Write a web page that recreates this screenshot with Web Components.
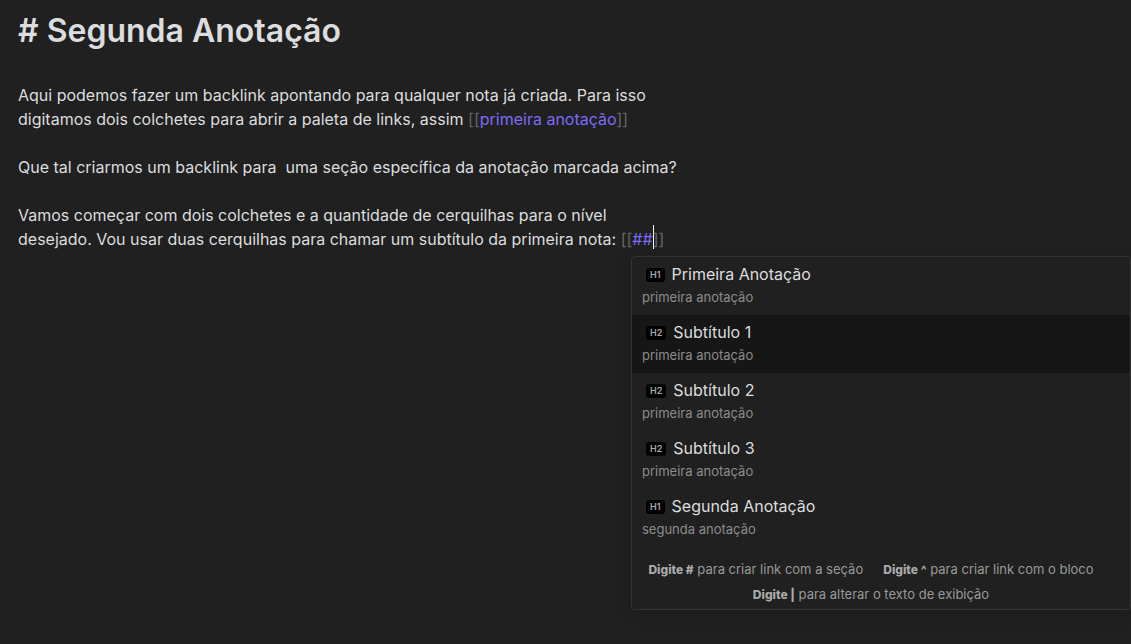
<!DOCTYPE html>
<html lang="pt-BR">
<head>
<meta charset="utf-8">
<meta name="viewport" content="width=device-width, initial-scale=1">
<title>Segunda Anotação</title>
<style>
  body {
    margin: 0;
    min-height: 100vh;
    background: #202020;
    color: #dcddde;
    font: 16px/24px Inter, sans-serif;
    --muted: #999999;
    --faint: #666666;
    --accent: #7b6cf6;
    --border: #333333;
  }
</style>
</head>
<body>
<note-editor>
  <h1 slot="title"># Segunda Anotação</h1>
  <note-paragraph>Aqui podemos fazer um backlink apontando para qualquer nota já criada. Para isso digitamos dois colchetes para abrir a paleta de links, assim <wiki-link>primeira anotação</wiki-link></note-paragraph>
  <note-paragraph>Que tal criarmos um backlink para  uma seção específica da anotação marcada acima?</note-paragraph>
  <note-paragraph>Vamos começar com dois colchetes e a quantidade de cerquilhas para o nível desejado. Vou usar duas cerquilhas para chamar um subtítulo da primeira nota: <wiki-link editing>##</wiki-link></note-paragraph>
  <suggestion-menu slot="menu">
    <suggestion-item level="H1" note="primeira anotação">Primeira Anotação</suggestion-item>
    <suggestion-item level="H2" note="primeira anotação" selected>Subtítulo 1</suggestion-item>
    <suggestion-item level="H2" note="primeira anotação">Subtítulo 2</suggestion-item>
    <suggestion-item level="H2" note="primeira anotação">Subtítulo 3</suggestion-item>
    <suggestion-item level="H1" note="segunda anotação">Segunda Anotação</suggestion-item>
    <key-hint slot="hints" keys="Digite #">para criar link com a seção</key-hint>
    <key-hint slot="hints" keys="Digite ^">para criar link com o bloco</key-hint>
    <key-hint slot="hints" keys="Digite |">para alterar o texto de exibição</key-hint>
  </suggestion-menu>
</note-editor>

<template id="note-editor">
  <style>
    :host { display: block; position: relative; min-height: 100vh; box-sizing: border-box; padding: 7px 18px 24px; }
    main { display: flex; flex-direction: column; gap: 24px; max-width: 660px; }
    ::slotted(h1) { margin: 0 0 4px; font-size: 32px; line-height: 48px; font-weight: 600; }
    aside { position: absolute; top: 256px; right: 0; width: 500px; max-width: 100%; }
  </style>
  <main><slot name="title"></slot><slot></slot></main>
  <aside><slot name="menu"></slot></aside>
</template>

<template id="note-paragraph">
  <style>
    :host { display: block; }
    p { margin: 0; white-space: pre-wrap; }
  </style>
  <p><slot></slot></p>
</template>

<template id="wiki-link"><style>
    :host { white-space: nowrap; color: var(--faint); }
    a { color: var(--accent); text-decoration: none; }
    .caret { display: none; }
    :host([editing]) .caret { display: inline-block; width: 1px; height: 24px; margin: -4px -1px 0 0; vertical-align: text-bottom; background: #ffffff; }
  </style><span>[[</span><a href="#"><slot></slot></a><span class="caret"></span><span>]]</span></template>

<template id="suggestion-menu">
  <style>
    :host { display: block; box-sizing: border-box; border: 1px solid var(--border); border-radius: 4px; background: #202020; box-shadow: 0 4px 16px rgba(0, 0, 0, 0.2); overflow: hidden; }
    footer { display: flex; flex-wrap: wrap; justify-content: center; padding: 10px 10px 2px; }
  </style>
  <slot></slot>
  <footer><slot name="hints"></slot></footer>
</template>

<template id="suggestion-item">
  <style>
    :host { display: block; }
    button { display: block; width: 100%; margin: 0; padding: 4px 10px; border: 0; background: none; color: inherit; font: inherit; text-align: left; }
    :host([selected]) button { background: #161616; }
    .title { display: flex; align-items: center; gap: 7px; padding-left: 4px; line-height: 26px; }
    .level { margin-top: 2px; padding: 0 4px; border-radius: 3px; background: #000000; color: #aaaaaa; font-size: 9px; line-height: 14px; font-weight: 600; }
    .note { display: block; color: #8c8c8c; font-size: 13px; line-height: 20px; padding-bottom: 4px; }
  </style>
  <button type="button"><span class="title"><span class="level"></span><span><slot></slot></span></span><span class="note"></span></button>
</template>

<template id="key-hint">
  <style>
    :host { display: block; margin-right: 20px; color: var(--muted); font-size: 13px; line-height: 25px; }
    b { color: #aaaaaa; font-size: 12px; font-weight: 800; }
  </style>
  <b></b> <slot></slot>
</template>

<script>
  function define(name, fill) {
    customElements.define(name, class extends HTMLElement {
      constructor() {
        super();
        this.attachShadow({ mode: "open" })
          .append(document.getElementById(name).content.cloneNode(true));
      }
      connectedCallback() {
        if (fill) fill(this, this.shadowRoot);
      }
    });
  }
  define("note-editor");
  define("note-paragraph");
  define("wiki-link");
  define("suggestion-menu");
  define("suggestion-item", (host, root) => {
    root.querySelector(".level").textContent = host.getAttribute("level");
    root.querySelector(".note").textContent = host.getAttribute("note");
  });
  define("key-hint", (host, root) => {
    root.querySelector("b").textContent = host.getAttribute("keys");
  });
</script>
</body>
</html>
